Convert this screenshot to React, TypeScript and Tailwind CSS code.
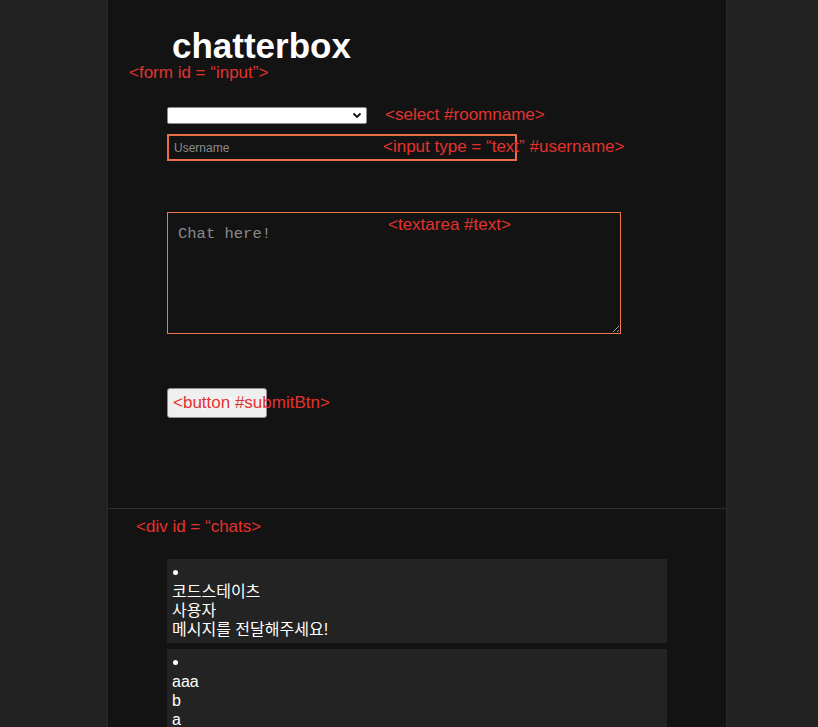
import React from "react";

const chats = [
  { id: 1, lines: ["코드스테이츠", "사용자", "메시지를 전달해주세요!"] },
  { id: 2, lines: ["aaa", "b", "a"] },
];

// red guide labels drawn over the mockup
const notes = [
  { text: "<form id = “input”>", cls: "left-[21px] top-[63px]" },
  { text: "<select #roomname>", cls: "left-[277px] top-[105px]" },
  { text: "<input type = “text” #username>", cls: "left-[275px] top-[137px]" },
  { text: "<textarea #text>", cls: "left-[280px] top-[215px]" },
  { text: "<button #submitBtn>", cls: "left-[65px] top-[393px]" },
  { text: "<div id = “chats>", cls: "left-[28px] top-[517px]" },
];

export default function App() {
  return (
    <div className="min-h-screen bg-[#222222] font-['Liberation_Sans','Noto_Sans_CJK_KR',sans-serif]">
      <div className="relative ml-[107px] w-[620px] min-h-[727px] bg-[#131313] border-x border-[#2a2a2a]">
        <form id="input" className="flex flex-col items-start pl-[59px] pt-[28px] pb-[90px]">
          <h1 className="ml-[5px] text-[35px] leading-none font-bold text-white">
            chatterbox
          </h1>
          <div className="relative mt-[44px] w-[200px]">
            <select
              id="roomname"
              className="block h-[17px] w-full appearance-none rounded-[2px] border border-[#8a8a8a] bg-white text-[12px]"
            />
            <svg
              className="pointer-events-none absolute right-[5px] top-[4px] h-[9px] w-[10px]"
              viewBox="0 0 10 9"
            >
              <path d="M1.5 2.5 L5 6 L8.5 2.5" fill="none" stroke="#111" strokeWidth="1.8" />
            </svg>
          </div>
          <input
            id="username"
            type="text"
            placeholder="Username"
            className="mt-[10px] h-[27px] w-[350px] border-2 border-[#e86e45] bg-transparent px-[5px] text-[12px] text-white placeholder:text-[#8c8c8c] outline-none"
          />
          <textarea
            id="text"
            placeholder="Chat here!"
            className="mt-[51px] h-[122px] w-[454px] resize border border-[#f0784c] bg-transparent px-[10px] pt-[10px] font-['Liberation_Mono',monospace] text-[15.5px] text-white placeholder:text-[#8a8a8a] outline-none"
          />
          <button
            id="submitBtn"
            type="button"
            className="mt-[54px] h-[30px] w-[100px] rounded-[3px] border border-[#8f8f8f] bg-[#efefef] text-[16px] text-white"
          >
            post
          </button>
        </form>

        <div className="border-t border-[#2e2e2e]" />

        <ul id="chats" className="flex flex-col gap-[6px] pl-[59px] pt-[50px]">
          {chats.map((chat) => (
            <li
              key={chat.id}
              className="w-[500px] bg-[#232323] px-[5px] py-[4px] text-[16px] leading-[19px] text-white"
            >
              <div className="flex h-[19px] items-center">
                <span className="ml-[1px] h-[5px] w-[5px] rounded-full bg-white" />
              </div>
              {chat.lines.map((line, i) => (
                <div key={i}>{line}</div>
              ))}
            </li>
          ))}
        </ul>

        {notes.map((n) => (
          <span
            key={n.text}
            className={`pointer-events-none absolute whitespace-nowrap text-[17px] leading-[20px] text-[#e2322d] ${n.cls}`}
          >
            {n.text}
          </span>
        ))}
      </div>
    </div>
  );
}
